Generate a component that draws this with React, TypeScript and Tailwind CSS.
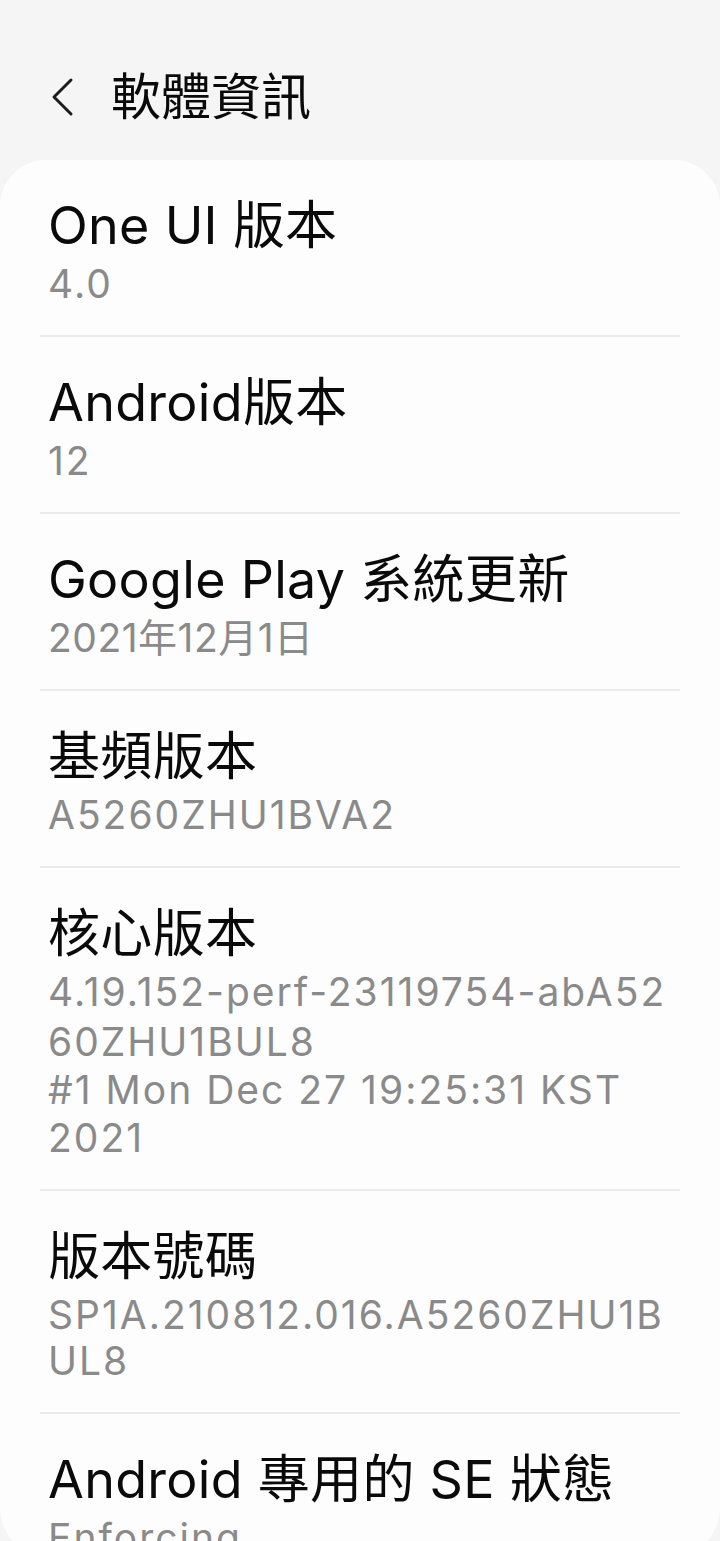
import React from "react";

type InfoRow = {
  title: string;
  lines: string[];
  tight?: boolean;
};

const ROWS: InfoRow[] = [
  { title: "One UI 版本", lines: ["4.0"] },
  { title: "Android版本", lines: ["12"] },
  { title: "Google Play 系統更新", lines: ["2021年12月1日"], tight: true },
  { title: "基頻版本", lines: ["A5260ZHU1BVA2"] },
  {
    title: "核心版本",
    lines: [
      "4.19.152-perf-23119754-abA52",
      "60ZHU1BUL8",
      "#1 Mon Dec 27 19:25:31 KST",
      "2021",
    ],
  },
  { title: "版本號碼", lines: ["SP1A.210812.016.A5260ZHU1B", "UL8"] },
  { title: "Android 專用的 SE 狀態", lines: ["Enforcing"] },
];

const FONT = {
  fontFamily: '"Inter", "Noto Sans CJK TC", "Noto Sans", sans-serif',
};

function BackChevron() {
  return (
    <svg width="24" height="40" viewBox="0 0 24 40" fill="none">
      <polyline
        points="21,3 4,20 21,37"
        stroke="#1c1c1c"
        strokeWidth="3"
        strokeLinecap="round"
        strokeLinejoin="round"
      />
    </svg>
  );
}

/** 設定列表一列 */
function Row({ row, last }: { row: InfoRow; last: boolean }) {
  return (
    <div>
      <div className="px-[8px] pt-[31px] pb-[27px]">
        <p className="text-[52px] leading-[69px] tracking-[0.3px] text-[#0a0a0a] whitespace-nowrap">
          {row.title}
        </p>
        {row.lines.map((line, i) => (
          <p
            key={i}
            className={`text-[39px] leading-[48px] text-[#8a8a8a] whitespace-nowrap ${
              row.tight ? "tracking-[0.5px]" : "tracking-[2px]"
            } ${i === 1 && row.lines.length > 2 ? "mt-[2px]" : ""} ${
              i > 0 && row.lines.length === 2 ? "-mt-[2px]" : ""
            }`}
          >
            {line}
          </p>
        ))}
      </div>
      {!last && <div className="h-[2px] bg-[#ebebeb]" />}
    </div>
  );
}

export default function App() {
  return (
    <div
      className="h-[1541px] w-[720px] overflow-hidden bg-[#f5f5f5]"
      style={FONT}
    >
      <header className="flex h-[160px] items-start pt-[62px]">
        <div className="flex h-[70px] items-center pl-[50px]">
          <BackChevron />
        </div>
        <h1 className="ml-[37px] text-[50px] leading-[70px] text-[#0a0a0a]">
          軟體資訊
        </h1>
      </header>

      <main className="h-[1395px] overflow-hidden rounded-[46px] bg-[#fdfdfd] px-[40px]">
        {ROWS.map((row, i) => (
          <Row key={row.title} row={row} last={i === ROWS.length - 1} />
        ))}
      </main>
    </div>
  );
}
